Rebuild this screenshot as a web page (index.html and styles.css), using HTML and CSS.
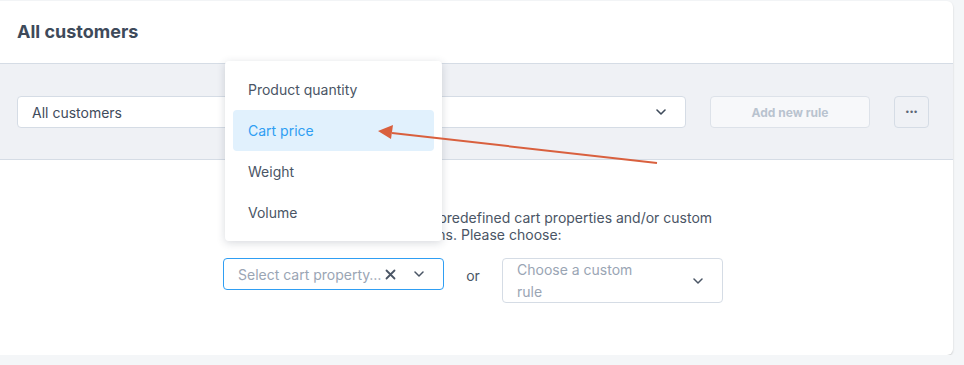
FILE: index.html
```html
<!DOCTYPE html>
<html lang="en">
<head>
    <meta charset="UTF-8">
    <meta name="viewport" content="width=device-width, initial-scale=1.0">
    <title>Cart discount rules</title>
    <link rel="stylesheet" href="styles.css">
</head>
<body>
    <div class="card">
        <div class="card-header">
            <h2 class="title">All customers</h2>
        </div>
        <div class="toolbar">
            <div class="select customer-select">
                <span class="select-value">All customers</span>
                <svg class="chevron" width="10" height="6" viewBox="0 0 10 6"><path d="M1 1l4 4 4-4" fill="none" stroke="#3f4b5b" stroke-width="1.6" stroke-linecap="round" stroke-linejoin="round"/></svg>
            </div>
            <button class="btn-add">Add new rule</button>
            <button class="btn-more">&bull;&bull;&bull;</button>
        </div>
        <div class="card-body">
            <p class="hint">The discount can be based on predefined cart properties and/or custom conditions. Please choose:</p>
            <div class="choice-row">
                <div class="select property-select">
                    <span class="placeholder">Select cart property&hellip;</span>
                    <svg class="clear" width="11" height="11" viewBox="0 0 11 11"><path d="M1.5 1.5l8 8M9.5 1.5l-8 8" stroke="#4a5565" stroke-width="1.8" stroke-linecap="round"/></svg>
                    <svg class="chevron" width="10" height="6" viewBox="0 0 10 6"><path d="M1 1l4 4 4-4" fill="none" stroke="#4a5565" stroke-width="1.5" stroke-linecap="round" stroke-linejoin="round"/></svg>
                </div>
                <span class="or">or</span>
                <div class="select rule-select">
                    <span class="placeholder">Choose a custom rule</span>
                    <svg class="chevron" width="10" height="6" viewBox="0 0 10 6"><path d="M1 1l4 4 4-4" fill="none" stroke="#4a5565" stroke-width="1.5" stroke-linecap="round" stroke-linejoin="round"/></svg>
                </div>
            </div>
        </div>

        <ul class="menu">
            <li>Product quantity</li>
            <li class="active">Cart price</li>
            <li>Weight</li>
            <li>Volume</li>
        </ul>

        <svg class="pointer" width="300" height="50" viewBox="0 0 300 50">
            <line x1="16" y1="5" x2="281" y2="35" stroke="#d9603e" stroke-width="2"/>
            <polygon points="2,3 17,-3 15,11" fill="#d9603e"/>
        </svg>
    </div>
</body>
</html>
```

FILE: styles.css
```css
body {
    margin: 0;
    padding: 0;
    background-color: #f4f6f8;
    font-family: Inter, "Noto Sans", sans-serif;
    color: #4a5565;
}
.card {
    position: relative;
    width: 959px;
    margin: 1px 0 0 -6px;
    background-color: #fff;
    border-radius: 6px;
    box-shadow: 0 1px 2px rgba(0, 0, 0, 0.18);
}
.card-header {
    height: 62px;
    padding-left: 23px;
    display: flex;
    align-items: center;
    border-bottom: 1px solid #d5dce5;
}
.title {
    margin: 0 0 2px;
    font-size: 18px;
    font-weight: 700;
    color: #3e4a5a;
}
.toolbar {
    display: flex;
    align-items: center;
    gap: 24px;
    padding: 32px 24px 31px 23px;
    background-color: #eff1f5;
    border-bottom: 1px solid #d5dce5;
}
.select {
    display: flex;
    align-items: center;
    box-sizing: border-box;
    background-color: #fff;
    border: 1px solid #d5dce5;
    border-radius: 4px;
    font-size: 14px;
}
.customer-select {
    width: 669px;
    height: 32px;
    padding: 0 19px 0 14px;
}
.select-value {
    flex: 1;
    color: #3f4b5b;
}
.btn-add {
    width: 160px;
    height: 32px;
    background-color: #f7f8fa;
    border: 1px solid #dde2e9;
    border-radius: 4px;
    color: #b9c3cf;
    font-family: Inter, sans-serif;
    font-size: 12px;
    font-weight: 700;
}
.btn-more {
    width: 35px;
    height: 32px;
    background-color: #eff1f5;
    border: 1px solid #d5dce5;
    border-radius: 4px;
    color: #5b6676;
    font-size: 9px;
    letter-spacing: 1px;
    padding: 0 0 0 1px;
}
.card-body {
    height: 195px;
    padding-top: 49px;
    box-sizing: border-box;
}
.hint {
    width: 500px;
    margin: 0 0 0 229px;
    text-align: center;
    font-size: 14px;
    line-height: 17px;
    color: #4a5565;
}
.choice-row {
    display: flex;
    align-items: flex-start;
    margin: 15px 0 0 229px;
}
.property-select {
    width: 221px;
    height: 32px;
    padding: 0 19px 0 14px;
    border-color: #2f9ef3;
}
.placeholder {
    flex: 1;
    color: #9aa5b4;
}
.property-select .placeholder {
    white-space: nowrap;
}
.clear {
    margin: 0 18px 0 2px;
}
.or {
    width: 58px;
    text-align: center;
    font-size: 14px;
    line-height: 35px;
    color: #4a5565;
}
.rule-select {
    width: 221px;
    height: 45px;
    padding: 0 19px 0 14px;
    line-height: 22px;
}
.rule-select .placeholder {
    padding-right: 40px;
}
.menu {
    position: absolute;
    top: 60px;
    left: 231px;
    width: 217px;
    margin: 0;
    padding: 8px;
    box-sizing: border-box;
    list-style: none;
    background-color: #fff;
    border-radius: 4px;
    box-shadow: 0 2px 8px rgba(40, 50, 70, 0.18);
}
.menu li {
    height: 41px;
    line-height: 41px;
    padding-left: 15px;
    border-radius: 4px;
    font-size: 14px;
    color: #4a5565;
}
.menu li.active {
    background-color: #e1f1fd;
    color: #2f9ef3;
}
.pointer {
    position: absolute;
    top: 127px;
    left: 382px;
    overflow: visible;
}
```
